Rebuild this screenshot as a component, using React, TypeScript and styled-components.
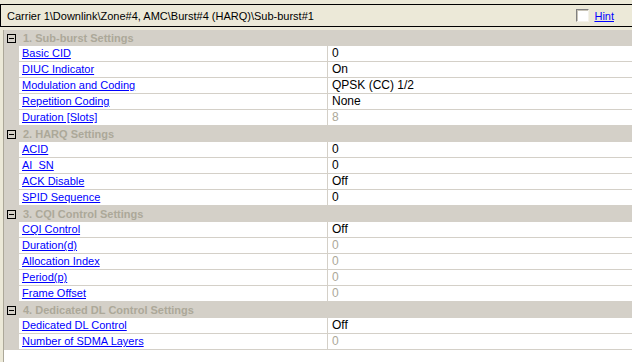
import React from "react";
import styled, { createGlobalStyle } from "styled-components";

interface Prop {
  label: string;
  value: string;
  disabled?: boolean;
}

interface Group {
  title: string;
  props: Prop[];
}

const groups: Group[] = [
  {
    title: "1. Sub-burst Settings",
    props: [
      { label: "Basic CID", value: "0" },
      { label: "DIUC Indicator", value: "On" },
      { label: "Modulation and Coding", value: "QPSK (CC) 1/2" },
      { label: "Repetition Coding", value: "None" },
      { label: "Duration [Slots]", value: "8", disabled: true },
    ],
  },
  {
    title: "2. HARQ Settings",
    props: [
      { label: "ACID", value: "0" },
      { label: "AI_SN", value: "0" },
      { label: "ACK Disable", value: "Off" },
      { label: "SPID Sequence", value: "0" },
    ],
  },
  {
    title: "3. CQI Control Settings",
    props: [
      { label: "CQI Control", value: "Off" },
      { label: "Duration(d)", value: "0", disabled: true },
      { label: "Allocation Index", value: "0", disabled: true },
      { label: "Period(p)", value: "0", disabled: true },
      { label: "Frame Offset", value: "0", disabled: true },
    ],
  },
  {
    title: "4. Dedicated DL Control Settings",
    props: [
      { label: "Dedicated DL Control", value: "Off" },
      { label: "Number of SDMA Layers", value: "0", disabled: true },
    ],
  },
];

const App: React.FC = () => {
  return (
    <>
      <GlobalStyle />
      <Frame>
        <PathBar>
          <PathBox>
            <PathText>Carrier 1\Downlink\Zone#4, AMC\Burst#4 (HARQ)\Sub-burst#1</PathText>
            <HintWrap>
              <CheckBox />
              <Link>Hint</Link>
            </HintWrap>
          </PathBox>
        </PathBar>
        <GridWrap>
          <Grid>
            {groups.map((g) => (
              <React.Fragment key={g.title}>
                <GroupHeader>
                  <Gutter>
                    <Toggle />
                  </Gutter>
                  <GroupTitle>{g.title}</GroupTitle>
                </GroupHeader>
                {g.props.map((p) => (
                  <Row key={p.label}>
                    <Gutter />
                    <Label>
                      <Link>{p.label}</Link>
                    </Label>
                    <Value $disabled={p.disabled}>{p.value}</Value>
                  </Row>
                ))}
              </React.Fragment>
            ))}
          </Grid>
        </GridWrap>
      </Frame>
    </>
  );
};

export default App;

const GlobalStyle = createGlobalStyle`
  html, body {
    margin: 0;
    padding: 0;
    background: #ffffff;
  }
  body {
    font-family: "Liberation Sans", Arial, sans-serif;
    font-size: 11px;
  }
`;

const Frame = styled.div`
  width: 632px;
  height: 362px;
  display: flex;
  flex-direction: column;
  overflow: hidden;
  background: #ece9d8;
`;

const PathBar = styled.div`
  padding: 4px 0 3px 0;
  background: #ece9d8;
`;

const PathBox = styled.div`
  height: 21px;
  border-top: 1px solid #000;
  border-bottom: 1px solid #000;
  border-left: 1px solid #000;
  display: flex;
  align-items: center;
  justify-content: space-between;
  padding: 0 18px 0 6px;
`;

const PathText = styled.span`
  font-size: 11px;
  color: #000;
  white-space: nowrap;
`;

const HintWrap = styled.div`
  display: flex;
  align-items: center;
  gap: 5px;
`;

const CheckBox = styled.span`
  width: 11px;
  height: 11px;
  background: #fff;
  border-top: 1px solid #808080;
  border-left: 1px solid #808080;
  border-right: 1px solid #f4f2ea;
  border-bottom: 1px solid #f4f2ea;
  box-shadow: inset 1px 1px 0 #c8c4b8;
`;

const Link = styled.span`
  color: #0000ff;
  text-decoration: underline;
  font-size: 11px;
  white-space: nowrap;
`;

const GridWrap = styled.div`
  flex: 1;
  padding-left: 3px;
  display: flex;
`;

const Grid = styled.div`
  flex: 1;
  background: #fff;
  border-left: 1px solid #aca899;
`;

const GroupHeader = styled.div`
  height: 16px;
  display: flex;
  align-items: center;
  background: #d4d0c8;
`;

const Gutter = styled.div`
  width: 15px;
  align-self: stretch;
  background: #d4d0c8;
  display: flex;
  align-items: center;
  justify-content: center;
`;

const Toggle = styled.span`
  position: relative;
  width: 7px;
  height: 7px;
  border: 1px solid #000;
  &::after {
    content: "";
    position: absolute;
    left: 1px;
    top: 3px;
    width: 5px;
    height: 1px;
    background: #000;
  }
`;

const GroupTitle = styled.span`
  padding-left: 4px;
  font-size: 11px;
  font-weight: bold;
  color: #aca899;
  white-space: nowrap;
`;

const Row = styled.div`
  height: 15px;
  display: grid;
  grid-template-columns: 15px 309px 1fr;
  border-bottom: 1px solid #d4d0c8;
`;

const Label = styled.div`
  padding-left: 3px;
  line-height: 15px;
  border-right: 1px solid #d4d0c8;
  overflow: hidden;
`;

const Value = styled.div<{ $disabled?: boolean }>`
  padding-left: 4px;
  line-height: 15px;
  font-size: 12px;
  color: ${(p) => (p.$disabled ? "#aca899" : "#000")};
`;
